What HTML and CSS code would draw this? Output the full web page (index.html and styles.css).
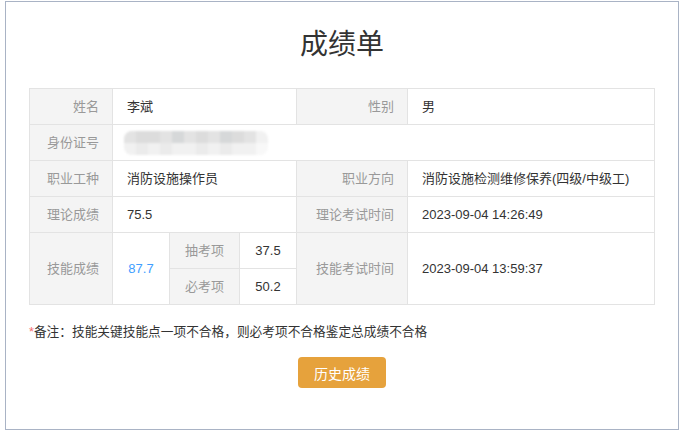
FILE: index.html
```html
<!DOCTYPE html>
<html lang="zh-CN">
<head>
<meta charset="utf-8">
<title>成绩单</title>
<link rel="stylesheet" href="styles.css">
</head>
<body>
<div class="card">
  <h1 class="title">成绩单</h1>
  <table class="score">
    <colgroup>
      <col class="c1"><col class="c2"><col class="c3"><col class="c4"><col class="c5"><col class="c6">
    </colgroup>
    <tr>
      <th>姓名</th>
      <td colspan="3">李斌</td>
      <th>性别</th>
      <td>男</td>
    </tr>
    <tr>
      <th>身份证号</th>
      <td colspan="5">
        <div class="mosaic">
          <span class="m b"></span><span class="m a"></span><span class="m a"></span><span class="m b"></span><span class="m c"></span><span class="m b"></span><span class="m a"></span><span class="m b"></span><span class="m c"></span><span class="m a"></span><span class="m b"></span><span class="m e"></span>
          <span class="m e"></span><span class="m d"></span><span class="m e"></span><span class="m d"></span><span class="m e"></span><span class="m e"></span><span class="m d"></span><span class="m e"></span><span class="m d"></span><span class="m e"></span><span class="m e"></span><span class="m f"></span>
        </div>
      </td>
    </tr>
    <tr>
      <th>职业工种</th>
      <td colspan="3">消防设施操作员</td>
      <th>职业方向</th>
      <td>消防设施检测维修保养(四级/中级工)</td>
    </tr>
    <tr>
      <th>理论成绩</th>
      <td colspan="3">75.5</td>
      <th>理论考试时间</th>
      <td>2023-09-04 14:26:49</td>
    </tr>
    <tr>
      <th rowspan="2">技能成绩</th>
      <td rowspan="2" class="center blue">87.7</td>
      <th class="center">抽考项</th>
      <td class="center">37.5</td>
      <th rowspan="2">技能考试时间</th>
      <td rowspan="2">2023-09-04 13:59:37</td>
    </tr>
    <tr>
      <th class="center">必考项</th>
      <td class="center">50.2</td>
    </tr>
  </table>
  <p class="note"><span class="star">*</span>备注：技能关键技能点一项不合格，则必考项不合格鉴定总成绩不合格</p>
  <div class="actions">
    <button class="btn" type="button">历史成绩</button>
  </div>
</div>
</body>
</html>
```

FILE: styles.css
```css
html, body {
  margin: 0;
  padding: 0;
  background: #fff;
}

body {
  font-family: "Liberation Sans", "Noto Sans CJK SC", sans-serif;
  font-size: 13px;
  color: #333;
}

.card {
  box-sizing: border-box;
  width: 674px;
  height: 429px;
  margin: 1px 0 0 5px;
  border: 1px solid #a9b3c5;
  padding: 23px;
}

.title {
  margin: 0 0 23px;
  font-size: 28px;
  line-height: 40px;
  font-weight: normal;
  text-align: center;
  color: #333;
}

.score {
  width: 625px;
  border-collapse: collapse;
  table-layout: fixed;
}

.c1 { width: 83px; }
.c2 { width: 57px; }
.c3 { width: 70px; }
.c4 { width: 57px; }
.c5 { width: 111px; }
.c6 { width: 247px; }

.score tr { height: 36px; }

.score th,
.score td {
  border: 1px solid #e3e3e3;
  padding: 0;
  vertical-align: middle;
  font-weight: normal;
  white-space: nowrap;
  line-height: 18px;
}

.score th {
  background: #f4f4f4;
  color: #999;
  text-align: right;
  padding-right: 13px;
}

.score td {
  text-align: left;
  padding-left: 14px;
  color: #333;
}

.score th.center,
.score td.center {
  text-align: center;
  padding: 0;
}

.blue { color: #409eff !important; }

.mosaic {
  display: grid;
  grid-template-columns: repeat(12, 12px);
  grid-auto-rows: 12px;
  width: 144px;
  margin-left: -3px;
  filter: blur(0.8px);
  border-radius: 8px;
  overflow: hidden;
}

.m { display: block; }
.m.a { background: #dcdcdc; }
.m.b { background: #e3e3e3; }
.m.c { background: #d6d8d9; }
.m.d { background: #ebebeb; }
.m.e { background: #f1f1f1; }
.m.f { background: #f8f8f8; }

.note {
  margin: 17px 0 0;
  line-height: 20px;
  font-size: 12.7px;
  color: #333;
}

.star { color: #f56c6c; }

.actions {
  display: flex;
  justify-content: center;
  margin-top: 15px;
}

.btn {
  width: 88px;
  height: 31px;
  border: none;
  border-radius: 4px;
  background: #e6a23c;
  color: #fff;
  font-family: "Liberation Sans", "Noto Sans CJK SC", sans-serif;
  font-size: 14px;
  padding: 0;
}
```
